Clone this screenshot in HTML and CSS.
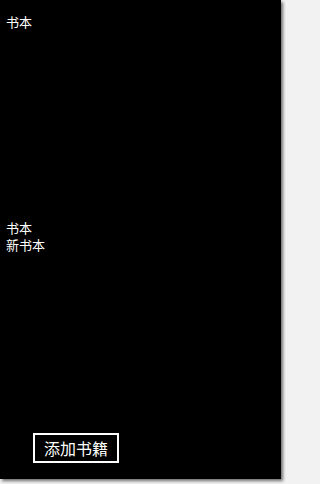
FILE: index.html
```html
<!DOCTYPE html>
<html lang="zh">
<head>
<meta charset="utf-8">
<link rel="stylesheet" href="styles.css">
</head>
<body>
<div class="screen">
  <div class="title">书本</div>
  <div class="list">
    <div class="item">书本</div>
    <div class="item">新书本</div>
  </div>
  <div class="actions">
    <button class="add-btn">添加书籍</button>
  </div>
</div>
</body>
</html>
```
FILE: styles.css
```css
html, body {
  margin: 0;
  padding: 0;
  background: #f2f2f2;
}
body {
  width: 286px;
  height: 484px;
  overflow: hidden;
  font-family: "Noto Sans CJK SC", "Noto Sans", sans-serif;
}
.screen {
  width: 281px;
  height: 479px;
  background: #000;
  color: #fff;
  display: flex;
  flex-direction: column;
  box-shadow: 2px 2px 3px rgba(0, 0, 0, 0.55);
  box-sizing: border-box;
  padding: 13px 0 0 6px;
}
.title,
.item {
  font-size: 13px;
  line-height: 17px;
}
.list {
  margin-top: 189px;
}
.actions {
  margin-top: auto;
  margin-bottom: 16px;
  padding-left: 27px;
}
.add-btn {
  width: 86px;
  height: 30px;
  background: #000;
  color: #fff;
  border: 2px solid #fff;
  font-family: "Noto Sans CJK SC", "Noto Sans", sans-serif;
  font-size: 16px;
  line-height: 20px;
  padding: 0;
  display: flex;
  align-items: center;
  justify-content: center;
}
```
